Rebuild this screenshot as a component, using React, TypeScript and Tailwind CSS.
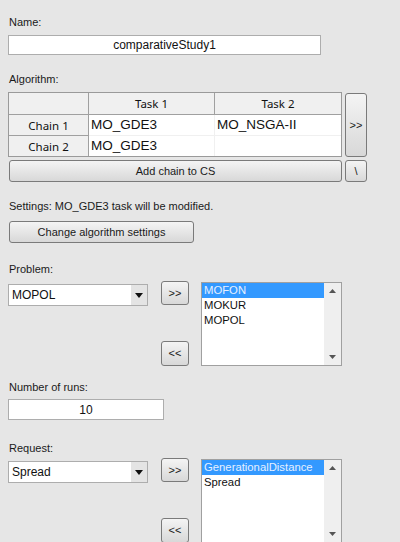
import React from "react";

const ui = { fontFamily: '"Liberation Sans", Arial, sans-serif' };
const seg = { fontFamily: '"Noto Sans", "Open Sans", sans-serif' };

function Btn({
  children,
  className = "",
}: {
  children: React.ReactNode;
  className?: string;
}) {
  return (
    <div
      className={`flex items-center justify-center rounded-[3px] border border-[#7a7a7a] bg-gradient-to-b from-[#f4f4f4] to-[#d8d8d8] text-[11px] text-[#1a1a1a] ${className}`}
      style={ui}
    >
      {children}
    </div>
  );
}

function Label({ text, className = "" }: { text: string; className?: string }) {
  return (
    <div className={`h-[14px] text-[11px] leading-[14px] text-[#1a1a1a] ${className}`} style={ui}>
      {text}
    </div>
  );
}

function Combo({ value }: { value: string }) {
  return (
    <div className="flex h-[22px] w-[140px] border border-[#adadad] bg-white">
      <div className="flex flex-1 items-center pl-[3px] text-[12px] text-[#111]" style={ui}>
        {value}
      </div>
      <div className="flex w-[16px] items-center justify-center bg-[#e4e4e4]">
        <svg width="8" height="5" viewBox="0 0 8 5">
          <path d="M0 0h8L4 5z" fill="#111" />
        </svg>
      </div>
    </div>
  );
}

function ListBox({ items, height }: { items: string[]; height: string }) {
  return (
    <div className={`flex w-[141px] border border-[#a0a0a0] bg-white ${height}`}>
      <div className="flex-1 pt-[0px]" style={ui}>
        {items.map((it, i) => (
          <div
            key={it}
            className={`h-[15px] pl-[2px] text-[11.3px] leading-[15px] ${
              i === 0 ? "bg-[#3399ff] text-[#e6f0ff]" : "text-[#111]"
            }`}
          >
            {it}
          </div>
        ))}
      </div>
      <div className="flex w-[17px] flex-col items-center justify-between bg-[#efefef] py-[6px]">
        <svg width="7" height="4" viewBox="0 0 7 4">
          <path d="M0 4h7L3.5 0z" fill="#555" />
        </svg>
        <svg width="7" height="4" viewBox="0 0 7 4">
          <path d="M0 0h7L3.5 4z" fill="#555" />
        </svg>
      </div>
    </div>
  );
}

function Picker({ value, items, listH }: { value: string; items: string[]; listH: string }) {
  return (
    <div className="flex">
      <div className="mt-[3px]">
        <Combo value={value} />
      </div>
      <div className="ml-[13px] flex w-[28px] flex-col justify-between">
        <Btn className="h-[24px] w-[28px] text-[9px]">&gt;&gt;</Btn>
        <Btn className="h-[25px] w-[28px] text-[9px]">&lt;&lt;</Btn>
      </div>
      <div className="ml-[12px] mt-[1px]">
        <ListBox items={items} height={listH} />
      </div>
    </div>
  );
}

function Table() {
  const head = "flex items-center justify-center bg-[#f0f0f0] text-[11.5px] text-[#111]";
  const cell = "flex items-center pl-[2px] text-[13.5px] text-[#111]";
  return (
    <div className="w-[334px] border border-[#9a9a9a] bg-white">
      <div className="grid grid-cols-[80px_126px_126px]">
        <div className={`${head} h-[22px] border-b border-r border-[#a0a0a0]`} />
        <div className={`${head} h-[22px] border-b border-r border-[#a0a0a0]`} style={seg}>
          Task 1
        </div>
        <div className={`${head} h-[22px] border-b border-[#a0a0a0]`} style={seg}>
          Task 2
        </div>
        <div className={`${head} h-[21px] border-b border-r border-[#a0a0a0] pt-[2px]`} style={seg}>
          Chain 1
        </div>
        <div className={`${cell} h-[21px] border-b border-r border-[#f0f0f0]`} style={ui}>
          MO_GDE3
        </div>
        <div className={`${cell} h-[21px] border-b border-[#f0f0f0]`} style={ui}>
          MO_NSGA-II
        </div>
        <div className={`${head} h-[20px] border-r border-[#a0a0a0] pt-[2px]`} style={seg}>
          Chain 2
        </div>
        <div className={`${cell} h-[20px] border-r border-[#f0f0f0]`} style={ui}>
          MO_GDE3
        </div>
        <div className={`${cell} h-[20px]`} />
      </div>
    </div>
  );
}

export default function App() {
  return (
    <div className="h-[542px] w-[400px] overflow-hidden bg-[#e6e6e6] pl-[8px]">
      <div className="flex flex-col">
        <Label text="Name:" className="mt-[15px] pl-[1px]" />
        <div
          className="mt-[6px] flex h-[20px] w-[313px] items-center justify-center border border-[#adadad] bg-white text-[12px] text-[#111]"
          style={ui}
        >
          comparativeStudy1
        </div>

        <Label text="Algorithm:" className="mt-[17px] pl-[1px]" />
        <div className="mt-[6px] flex">
          <Table />
          <Btn className="ml-[3px] mt-[1px] h-[64px] w-[22px] text-[9px]">&gt;&gt;</Btn>
        </div>
        <div className="mt-[3px] flex">
          <Btn className="ml-[1px] h-[22px] w-[333px] text-[11.5px]">Add chain to CS</Btn>
          <Btn className="ml-[3px] h-[22px] w-[22px]">\</Btn>
        </div>

        <Label text="Settings: MO_GDE3 task will be modified." className="mt-[17px] pl-[1px]" />
        <Btn className="ml-[1px] mt-[8px] h-[22px] w-[185px] text-[11.5px]">
          Change algorithm settings
        </Btn>

        <Label text="Problem:" className="mt-[19px] pl-[1px]" />
        <div className="mt-[5px]">
          <Picker value="MOPOL" items={["MOFON", "MOKUR", "MOPOL"]} listH="h-[84px]" />
        </div>

        <Label text="Number of runs:" className="mt-[14px] pl-[1px]" />
        <div
          className="mt-[5px] flex h-[21px] w-[156px] items-center justify-center border border-[#adadad] bg-white text-[12px] text-[#111]"
          style={ui}
        >
          10
        </div>

        <Label text="Request:" className="mt-[21px] pl-[1px]" />
        <div className="mt-[3px]">
          <Picker value="Spread" items={["GenerationalDistance", "Spread"]} listH="h-[84px]" />
        </div>
      </div>
    </div>
  );
}
